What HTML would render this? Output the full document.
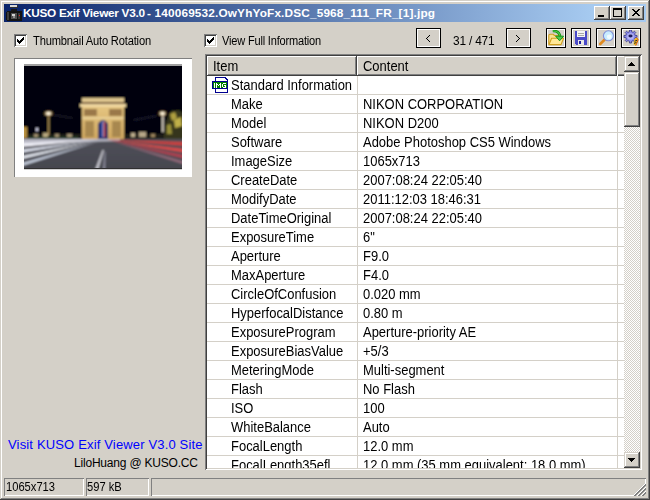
<!DOCTYPE html>
<html><head><meta charset="utf-8">
<style>
*{margin:0;padding:0;box-sizing:border-box}
html,body{width:650px;height:500px;overflow:hidden;background:#D4D0C8}
body{position:relative;font-family:"Liberation Sans",sans-serif;font-size:11px;color:#000}
.a{position:absolute}
.win{left:0;top:0;width:650px;height:500px;background:#D4D0C8;
 box-shadow:inset -1px -1px 0 #404040, inset 1px 1px 0 #D4D0C8, inset -2px -2px 0 #808080, inset 2px 2px 0 #FFFFFF}
.title{left:4px;top:4px;width:642px;height:18px;background:linear-gradient(to right,#0A246A 0,#A6CAF0 588px)}
.ttext{left:23px;top:4px;height:18px;line-height:18px;color:#fff;font-weight:bold;font-size:11.8px;letter-spacing:0;white-space:nowrap}
.cbtn{width:16px;height:14px;top:6px;background:#D4D0C8;
 box-shadow:inset -1px -1px 0 #404040, inset 1px 1px 0 #FFFFFF, inset -2px -2px 0 #808080}
.btn3{background:#D4D0C8;box-shadow:inset -1px -1px 0 #404040, inset 1px 1px 0 #D4D0C8, inset -2px -2px 0 #808080, inset 2px 2px 0 #FFFFFF}
.chk{width:13px;height:13px;background:#fff;box-shadow:inset 1px 1px 0 #808080, inset -1px -1px 0 #FFFFFF, inset 2px 2px 0 #404040, inset -2px -2px 0 #D4D0C8}
.u{font-size:12px;transform:scaleX(0.89);transform-origin:0 0;letter-spacing:0;white-space:nowrap}
.lbl{white-space:nowrap;line-height:13px;letter-spacing:-0.2px}
.fbtn{width:25px;height:20px;border:1px solid #000;box-shadow:inset 0 0 0 1px #fff;background:#D4D0C8}
.tbtn{width:20px;height:20px;border:1px solid #000;box-shadow:inset 0 0 0 1px #fff;background:#D4D0C8}
.tbtn svg{position:absolute;left:1px;top:1px}
.lv{left:205px;top:54px;width:437px;height:416px;background:#fff;
 box-shadow:inset 1px 1px 0 #808080, inset -1px -1px 0 #FFFFFF, inset 2px 2px 0 #404040, inset -2px -2px 0 #D4D0C8}
.hd{top:56px;height:20px;background:#D4D0C8;box-shadow:inset -1px -1px 0 #404040, inset 1px 1px 0 #FFFFFF, inset -2px -2px 0 #808080;
 font-size:13px;line-height:21px;padding-left:6px;white-space:nowrap}
.rows{left:207px;top:76px;width:417px;height:392px;overflow:hidden}
.row{position:relative;height:19px;border-bottom:1px solid #D4D0C8;font-size:13px;line-height:18px;white-space:nowrap}
.hs{position:absolute;left:6px;top:0;font-size:14px;transform:scaleX(0.926);transform-origin:0 0}
.row span{position:absolute;top:0;font-size:14px;transform:scaleX(0.926);transform-origin:0 0}
.c1{left:24px}
.c2{left:156px}
.vg{width:1px;background:#D4D0C8}
.sb{left:624px;top:56px;width:16px;height:412px;background-color:#D4D0C8;
 background-image:repeating-conic-gradient(#FFFFFF 0% 25%, #D4D0C8 0% 50%);background-size:2px 2px}
.sp{height:18px;box-shadow:inset 1px 1px 0 #808080, inset -1px -1px 0 #FFFFFF;padding-left:2px;line-height:18px;white-space:nowrap}
</style></head><body>
<div class="a win"></div>
<div class="a title"></div>
<!-- title icon -->
<svg class="a" style="left:5px;top:4px" width="17" height="17" viewBox="0 0 17 17" shape-rendering="crispEdges">
 <rect x="5" y="1" width="8" height="3" fill="#303030"/>
 <rect x="5" y="1" width="7" height="2" fill="#d8d8d8"/>
 <rect x="6" y="5" width="6" height="2" fill="#181818"/>
 <rect x="2" y="7" width="15" height="10" fill="#141414"/>
 <rect x="1" y="8" width="1" height="8" fill="#141414"/>
 <rect x="2" y="8" width="2" height="8" fill="#3c3c3c"/>
 <rect x="6" y="9" width="6" height="6" fill="#505050"/>
 <rect x="7" y="10" width="3" height="2" fill="#d0d0d0"/>
 <rect x="8" y="12" width="2" height="2" fill="#909090"/>
 <rect x="13" y="9" width="2" height="6" fill="#383838"/>
 <rect x="14" y="11" width="1" height="1" fill="#e02020"/>
</svg>
<div class="a ttext" style="letter-spacing:-0.28px">KUSO Exif Viewer V3.0</div><div class="a ttext" id="t2" style="left:147px;letter-spacing:0.16px">- 140069532.OwYhYoFx.DSC_5968_111_FR_[1].jpg</div>
<!-- caption buttons -->
<div class="a cbtn" style="left:594px"><div class="a" style="left:4px;top:9px;width:6px;height:2px;background:#000"></div></div>
<div class="a cbtn" style="left:610px"><div class="a" style="left:3px;top:2px;width:9px;height:9px;border:1px solid #000;border-top-width:2px"></div></div>
<div class="a cbtn" style="left:628px">
 <svg class="a" style="left:4px;top:3px" width="8" height="7" viewBox="0 0 8 7" shape-rendering="crispEdges" fill="#000">
  <rect x="0" y="0" width="2" height="1"/><rect x="6" y="0" width="2" height="1"/>
  <rect x="1" y="1" width="2" height="1"/><rect x="5" y="1" width="2" height="1"/>
  <rect x="2" y="2" width="4" height="1"/>
  <rect x="3" y="3" width="2" height="1"/>
  <rect x="2" y="4" width="4" height="1"/>
  <rect x="1" y="5" width="2" height="1"/><rect x="5" y="5" width="2" height="1"/>
  <rect x="0" y="6" width="2" height="1"/><rect x="6" y="6" width="2" height="1"/>
 </svg>
</div>

<!-- checkboxes -->
<div class="a chk" style="left:14px;top:34px">
 <svg class="a" style="left:3px;top:3px" width="7" height="7" viewBox="0 0 7 7" shape-rendering="crispEdges" fill="#000">
  <rect x="6" y="0" width="1" height="1"/><rect x="5" y="1" width="2" height="1"/><rect x="0" y="2" width="1" height="1"/><rect x="4" y="2" width="3" height="1"/>
  <rect x="0" y="3" width="2" height="1"/><rect x="3" y="3" width="3" height="1"/><rect x="0" y="4" width="5" height="1"/><rect x="1" y="5" width="3" height="1"/><rect x="2" y="6" width="1" height="1"/>
 </svg>
</div>
<div class="a lbl u" style="left:33px;top:35px;transform:scaleX(0.93)">Thumbnail Auto Rotation</div>
<div class="a chk" style="left:204px;top:34px">
 <svg class="a" style="left:3px;top:3px" width="7" height="7" viewBox="0 0 7 7" shape-rendering="crispEdges" fill="#000">
  <rect x="6" y="0" width="1" height="1"/><rect x="5" y="1" width="2" height="1"/><rect x="0" y="2" width="1" height="1"/><rect x="4" y="2" width="3" height="1"/>
  <rect x="0" y="3" width="2" height="1"/><rect x="3" y="3" width="3" height="1"/><rect x="0" y="4" width="5" height="1"/><rect x="1" y="5" width="3" height="1"/><rect x="2" y="6" width="1" height="1"/>
 </svg>
</div>
<div class="a lbl u" style="left:222px;top:35px;transform:scaleX(0.92)">View Full Information</div>

<!-- nav -->
<div class="a fbtn" style="left:416px;top:28px">
 <svg class="a" style="left:9px;top:6px" width="5" height="7" viewBox="0 0 5 7" shape-rendering="crispEdges" fill="#000">
  <rect x="3" y="0" width="1" height="1"/><rect x="2" y="1" width="1" height="1"/><rect x="1" y="2" width="1" height="1"/><rect x="0" y="3" width="1" height="1"/><rect x="1" y="4" width="1" height="1"/><rect x="2" y="5" width="1" height="1"/><rect x="3" y="6" width="1" height="1"/>
 </svg>
</div>
<div class="a lbl u" style="left:453px;top:35px;transform:scaleX(0.99)">31 / 471</div>
<div class="a fbtn" style="left:506px;top:28px">
 <svg class="a" style="left:9px;top:6px" width="5" height="7" viewBox="0 0 5 7" shape-rendering="crispEdges" fill="#000">
  <rect x="0" y="0" width="1" height="1"/><rect x="1" y="1" width="1" height="1"/><rect x="2" y="2" width="1" height="1"/><rect x="3" y="3" width="1" height="1"/><rect x="2" y="4" width="1" height="1"/><rect x="1" y="5" width="1" height="1"/><rect x="0" y="6" width="1" height="1"/>
 </svg>
</div>

<!-- toolbar buttons -->
<div class="a tbtn" style="left:546px;top:28px">
 <svg width="16" height="16" viewBox="0 0 16 16">
  <path d="M0.8 14.5 V5.6 Q0.8 4.3 2 4.3 H5.2 L6.4 5.5 H12 V8.5" fill="#F8E090" stroke="#D0A020" stroke-width="1.1"/>
  <path d="M1 14.6 L3.6 8.3 H15.6 L13 14.6 z" fill="#FFE898" stroke="#D0A020" stroke-width="1.1" stroke-linejoin="round"/>
  <path d="M4.8 1 C8.5 0.8 11.5 2 12.2 6.8" stroke="#109010" stroke-width="2.6" fill="none"/>
  <path d="M4.8 1 C8.5 0.8 11.5 2 12.2 6.8" stroke="#50C850" stroke-width="1.2" fill="none"/>
  <path d="M7.6 6.2 H15.6 L11.6 10.8 z" fill="#50C850" stroke="#109010" stroke-width="0.9" stroke-linejoin="round"/>
 </svg>
</div>
<div class="a tbtn" style="left:571px;top:28px">
 <svg width="16" height="16" viewBox="0 0 16 16" shape-rendering="crispEdges">
  <rect x="2" y="1" width="12" height="14" fill="#4A4AC8"/>
  <rect x="4" y="1" width="8" height="6" fill="#F4F4F4"/>
  <rect x="5" y="3" width="6" height="1" fill="#A8A8A8"/>
  <rect x="5" y="5" width="6" height="1" fill="#A8A8A8"/>
  <rect x="5" y="10" width="6" height="5" fill="#E8E8E8"/>
  <rect x="6" y="11" width="2" height="3" fill="#2020A0"/>
  <rect x="2" y="14" width="1" height="1" fill="#D4D0C8"/>
 </svg>
</div>
<div class="a tbtn" style="left:596px;top:28px">
 <svg width="16" height="16" viewBox="0 0 16 16">
  <line x1="2.2" y1="14" x2="6.5" y2="9.8" stroke="#E08A20" stroke-width="2.6" stroke-linecap="round"/>
  <circle cx="10.4" cy="5.8" r="5" fill="#C8ECFF" stroke="#8090D8" stroke-width="1.1"/>
  <circle cx="11.2" cy="6.8" r="2.4" fill="#F0FBFF"/>
 </svg>
</div>
<div class="a tbtn" style="left:621px;top:28px">
 <svg width="16" height="16" viewBox="0 0 16 16">
  <path d="M6.45 1.71 L6.47 -0.02 L8.53 -0.02 L8.55 1.71 L10.14 2.37 L11.38 1.16 L12.84 2.62 L11.63 3.86 L12.29 5.45 L14.02 5.47 L14.02 7.53 L12.29 7.55 L11.63 9.14 L12.84 10.38 L11.38 11.84 L10.14 10.63 L8.55 11.29 L8.53 13.02 L6.47 13.02 L6.45 11.29 L4.86 10.63 L3.62 11.84 L2.16 10.38 L3.37 9.14 L2.71 7.55 L0.98 7.53 L0.98 5.47 L2.71 5.45 L3.37 3.86 L2.16 2.62 L3.62 1.16 L4.86 2.37 z" fill="#8C8CE8" stroke="#282878" stroke-width="0.7" stroke-linejoin="round"/>
  <circle cx="7.5" cy="6.5" r="3.3" fill="#B4B4F6"/>
  <ellipse cx="7.5" cy="6" rx="2.1" ry="1.4" fill="#1c1c58"/>
  <path d="M11.2 9.2 L13.6 7.6 L15.2 9.8 L12.8 15.6 L10.6 14.6 z" fill="#F0B820"/>
  <path d="M11.6 11.2 L14.4 10.2 M11 13.4 L13.6 12.4" stroke="#202020" stroke-width="0.9"/>
  <path d="M13.6 7.6 L15.2 9.8 L12.8 15.6" stroke="#E06010" stroke-width="1" fill="none"/>
 </svg>
</div>

<!-- thumbnail -->
<div class="a" style="left:14px;top:58px;width:178px;height:119px;background:#fff;box-shadow:inset 1px 1px 0 #808080"></div>
<svg class="a" style="left:24px;top:64px" width="158" height="106" viewBox="0 0 158 106">
 <defs>
  <radialGradient id="lamp"><stop offset="0" stop-color="#ffffff"/><stop offset="0.35" stop-color="#fff0c8"/><stop offset="0.65" stop-color="#b08040" stop-opacity="0.45"/><stop offset="1" stop-color="#402010" stop-opacity="0"/></radialGradient>
  <linearGradient id="road" x1="0" y1="0" x2="0" y2="1"><stop offset="0" stop-color="#505058"/><stop offset="1" stop-color="#44464e"/></linearGradient>
  <linearGradient id="arcg" x1="0" y1="0" x2="0" y2="1"><stop offset="0" stop-color="#e4c480"/><stop offset="1" stop-color="#d0a860"/></linearGradient>
  <filter id="bl" x="-5%" y="-5%" width="110%" height="110%"><feGaussianBlur stdDeviation="0.8"/></filter>
  <clipPath id="pc"><rect x="0" y="2" width="158" height="102"/></clipPath>
 </defs>
 <rect x="0" y="0" width="158" height="2" fill="#a0a0a0"/>
 <g clip-path="url(#pc)"><g filter="url(#bl)">
 <rect x="-4" y="-2" width="166" height="80" fill="#04050b"/>
 <rect x="-4" y="56" width="166" height="18" fill="#05060f"/>
 <!-- horizon lights -->
 <rect x="-4" y="70" width="166" height="5" fill="#1e1c18"/>
 <rect x="-4" y="63" width="7" height="11" fill="#b89040"/>
 <rect x="10" y="70" width="4" height="3" fill="#a09070"/>
 <rect x="19" y="69" width="5" height="4" fill="#b8a880"/>
 <rect x="31" y="70" width="4" height="3" fill="#a09070"/>
 <rect x="43" y="70" width="5" height="3" fill="#a89878"/>
 <rect x="107" y="69" width="4" height="4" fill="#c0b090"/>
 <rect x="115" y="68" width="7" height="5" fill="#b8a888"/>
 <rect x="127" y="70" width="4" height="3" fill="#a08860"/>
 <rect x="4" y="73" width="50" height="1.5" fill="#2c4c30"/>
 <rect x="12" y="64" width="2" height="3" fill="#d8d8f0"/>
 <!-- tree -->
 <path d="M142 58 L147 47 L155 46 L162 52 L162 76 L140 76 L140 66 z" fill="#34341a"/>
 <path d="M146 50 L151 48 L153 54 L148 57 z" fill="#b0a040"/>
 <path d="M150 56 L157 53 L158 62 L151 64 z" fill="#c0b048"/>
 <path d="M143 61 L147 60 L148 70 L143 70 z" fill="#989038"/>
 <!-- lamps -->
 <rect x="24" y="50" width="1.3" height="21" fill="#b89858"/>
 <rect x="138" y="50" width="1.6" height="18" fill="#e8e0d0"/>
 <path d="M30 51 L48 54" stroke="#303040" stroke-width="0.8"/>
 <path d="M110 56 L132 52" stroke="#303048" stroke-width="0.8"/>
 <ellipse cx="24.5" cy="49.5" rx="6" ry="3.6" fill="url(#lamp)"/>
 <ellipse cx="138.5" cy="49.5" rx="5.5" ry="3.6" fill="url(#lamp)"/>
 <!-- arc -->
 <rect x="58" y="34" width="42" height="4" fill="#e0c890"/>
 <rect x="58" y="38" width="42" height="2" fill="#705030"/>
 <rect x="56" y="40" width="46" height="3" fill="#f0d8a0"/>
 <rect x="58" y="43" width="42" height="32" fill="url(#arcg)"/>
 <rect x="60" y="45" width="13" height="7" fill="#9a7848"/>
 <rect x="85" y="45" width="13" height="7" fill="#9a7848"/>
 <rect x="58" y="53" width="42" height="2" fill="#e8d098"/>
 <rect x="61" y="57" width="9" height="16" fill="#a88850"/>
 <rect x="88" y="57" width="9" height="16" fill="#a88850"/>
 <path d="M74 75 V60 Q79 52 84 60 V75 z" fill="#18286a"/>
 <rect x="78.5" y="57" width="1.2" height="16" fill="#c8c8e0"/>
 <rect x="79.7" y="58" width="1.5" height="15" fill="#c83828"/>
 <rect x="77" y="58" width="1.5" height="15" fill="#3050b0"/>
 <!-- road -->
 <path d="M-4 75 H162 V108 H-4 z" fill="url(#road)"/>
 <path d="M-4 75 L96 75 L96 77 L-4 79 z" fill="#b8b8c4"/>
 <!-- white streaks left -->
 <path d="M-4 79 L72 75.8 L-4 83 z" fill="#f0f0f8"/>
 <path d="M-4 86 L72 76.2 L-4 89 z" fill="#e0e4f0"/>
 <path d="M-4 92.5 L74 76.6 L-4 95.5 z" fill="#e8ecf4"/>
 <path d="M-4 99.5 L76 77 L-4 102.5 z" fill="#c8d0e0"/>
 <!-- red streaks right -->
 <path d="M162 78 L82 75.5 L162 82 z" fill="#c84040"/>
 <path d="M162 85 L84 76 L162 89 z" fill="#d84848"/>
 <path d="M162 91.5 L86 76.5 L162 95 z" fill="#b04050"/>
 <path d="M162 98 L88 77 L162 101 z" fill="#906878"/>
 <!-- lane lines -->
 <path d="M78.5 86 L80 86 L74 106 L71 106 z" fill="#c8c8d0"/>
 <path d="M80.5 88 L81.5 88 L81 106 L79 106 z" fill="#9090a0"/>
 </g></g>
 <rect x="0" y="104" width="158" height="1" fill="#303030"/>
 <rect x="0" y="105" width="158" height="1" fill="#d0d0d0"/>
</svg>

<!-- link texts -->
<div class="a" style="left:8px;top:437px;font-size:13px;line-height:15px;color:#0000FF;white-space:nowrap;letter-spacing:0.16px">Visit KUSO Exif Viewer V3.0 Site</div>
<div class="a" style="left:74px;top:456px;font-size:12px;line-height:15px;color:#000;white-space:nowrap;letter-spacing:-0.2px">LiloHuang @ KUSO.CC</div>

<!-- list view -->
<div class="a lv"></div>
<div class="a hd" style="left:207px;width:150px"><span class="hs">Item</span></div>
<div class="a hd" style="left:357px;width:260px"><span class="hs">Content</span></div>
<div class="a hd" style="left:617px;width:7px;padding:0;box-shadow:inset 1px 1px 0 #FFFFFF, inset 0 -1px 0 #404040, inset 0 -2px 0 #808080"></div>
<div class="a rows">
 <div class="a vg" style="left:150px;top:0;height:392px"></div>
 <div class="a vg" style="left:410px;top:0;height:392px"></div>
 <div class="row"><svg style="position:absolute;left:5px;top:1px" width="17" height="17" viewBox="0 0 17 17" shape-rendering="crispEdges">
   <path d="M3 0 H14 V1 H15 V2 H16 V16 H3 z" fill="#000090"/><path d="M4 1 H13 V2 H14 V3 H15 V15 H4 z" fill="#fff"/>
   <rect x="0" y="4" width="16" height="8" fill="#000090"/><rect x="1" y="5" width="14" height="6" fill="#008000"/>
   <g fill="#fff"><rect x="2" y="6" width="1" height="5"/><rect x="4" y="6" width="1" height="5"/><rect x="5" y="7" width="1" height="1"/><rect x="6" y="8" width="1" height="1"/><rect x="7" y="7" width="1" height="1"/><rect x="8" y="6" width="1" height="5"/><rect x="11" y="6" width="3" height="1"/><rect x="10" y="7" width="1" height="3"/><rect x="11" y="10" width="3" height="1"/><rect x="12" y="8" width="2" height="1"/><rect x="13" y="9" width="1" height="1"/></g>
  </svg><span class="c1">Standard Information</span></div>
 <div class="row"><span class="c1">Make</span><span class="c2">NIKON CORPORATION</span></div>
 <div class="row"><span class="c1">Model</span><span class="c2">NIKON D200</span></div>
 <div class="row"><span class="c1">Software</span><span class="c2">Adobe Photoshop CS5 Windows</span></div>
 <div class="row"><span class="c1">ImageSize</span><span class="c2">1065x713</span></div>
 <div class="row"><span class="c1">CreateDate</span><span class="c2">2007:08:24 22:05:40</span></div>
 <div class="row"><span class="c1">ModifyDate</span><span class="c2">2011:12:03 18:46:31</span></div>
 <div class="row"><span class="c1">DateTimeOriginal</span><span class="c2">2007:08:24 22:05:40</span></div>
 <div class="row"><span class="c1">ExposureTime</span><span class="c2">6"</span></div>
 <div class="row"><span class="c1">Aperture</span><span class="c2">F9.0</span></div>
 <div class="row"><span class="c1">MaxAperture</span><span class="c2">F4.0</span></div>
 <div class="row"><span class="c1">CircleOfConfusion</span><span class="c2">0.020 mm</span></div>
 <div class="row"><span class="c1">HyperfocalDistance</span><span class="c2">0.80 m</span></div>
 <div class="row"><span class="c1">ExposureProgram</span><span class="c2">Aperture-priority AE</span></div>
 <div class="row"><span class="c1">ExposureBiasValue</span><span class="c2">+5/3</span></div>
 <div class="row"><span class="c1">MeteringMode</span><span class="c2">Multi-segment</span></div>
 <div class="row"><span class="c1">Flash</span><span class="c2">No Flash</span></div>
 <div class="row"><span class="c1">ISO</span><span class="c2">100</span></div>
 <div class="row"><span class="c1">WhiteBalance</span><span class="c2">Auto</span></div>
 <div class="row"><span class="c1">FocalLength</span><span class="c2">12.0 mm</span></div>
 <div class="row"><span class="c1">FocalLength35efl</span><span class="c2">12.0 mm (35 mm equivalent: 18.0 mm)</span></div>
</div>
<!-- scrollbar -->
<div class="a sb"></div>
<div class="a cbtn" style="left:624px;top:56px;height:16px;box-shadow:inset -1px -1px 0 #404040, inset 1px 1px 0 #D4D0C8, inset -2px -2px 0 #808080, inset 2px 2px 0 #FFFFFF">
 <svg class="a" style="left:4px;top:6px" width="7" height="4" viewBox="0 0 7 4" shape-rendering="crispEdges" fill="#000"><rect x="3" y="0" width="1" height="1"/><rect x="2" y="1" width="3" height="1"/><rect x="1" y="2" width="5" height="1"/><rect x="0" y="3" width="7" height="1"/></svg>
</div>
<div class="a btn3" style="left:624px;top:72px;width:16px;height:55px"></div>
<div class="a cbtn" style="left:624px;top:452px;height:16px;box-shadow:inset -1px -1px 0 #404040, inset 1px 1px 0 #D4D0C8, inset -2px -2px 0 #808080, inset 2px 2px 0 #FFFFFF">
 <svg class="a" style="left:4px;top:6px" width="7" height="4" viewBox="0 0 7 4" shape-rendering="crispEdges" fill="#000"><rect x="0" y="0" width="7" height="1"/><rect x="1" y="1" width="5" height="1"/><rect x="2" y="2" width="3" height="1"/><rect x="3" y="3" width="1" height="1"/></svg>
</div>

<!-- status bar -->
<div class="a sp" style="left:4px;top:478px;width:80px"><span class="a u" style="left:2px;top:2px;line-height:15px;transform:scaleX(0.93)">1065x713</span></div>
<div class="a sp" style="left:86px;top:478px;width:63px"><span class="a u" style="left:1px;top:2px;line-height:15px;transform:scaleX(0.93)">597 kB</span></div>
<div class="a sp" style="left:151px;top:478px;width:495px"></div>
<svg class="a" style="left:633px;top:483px" width="13" height="13" viewBox="0 0 13 13" shape-rendering="crispEdges"><rect x="12" y="0" width="1" height="1" fill="#FFFFFF"/><rect x="11" y="1" width="1" height="1" fill="#FFFFFF"/><rect x="12" y="1" width="1" height="1" fill="#808080"/><rect x="10" y="2" width="1" height="1" fill="#FFFFFF"/><rect x="11" y="2" width="1" height="1" fill="#808080"/><rect x="12" y="2" width="1" height="1" fill="#808080"/><rect x="9" y="3" width="1" height="1" fill="#FFFFFF"/><rect x="10" y="3" width="1" height="1" fill="#808080"/><rect x="11" y="3" width="1" height="1" fill="#808080"/><rect x="12" y="3" width="1" height="1" fill="#D4D0C8"/><rect x="8" y="4" width="1" height="1" fill="#FFFFFF"/><rect x="9" y="4" width="1" height="1" fill="#808080"/><rect x="10" y="4" width="1" height="1" fill="#808080"/><rect x="11" y="4" width="1" height="1" fill="#D4D0C8"/><rect x="12" y="4" width="1" height="1" fill="#FFFFFF"/><rect x="7" y="5" width="1" height="1" fill="#FFFFFF"/><rect x="8" y="5" width="1" height="1" fill="#808080"/><rect x="9" y="5" width="1" height="1" fill="#808080"/><rect x="10" y="5" width="1" height="1" fill="#D4D0C8"/><rect x="11" y="5" width="1" height="1" fill="#FFFFFF"/><rect x="12" y="5" width="1" height="1" fill="#808080"/><rect x="6" y="6" width="1" height="1" fill="#FFFFFF"/><rect x="7" y="6" width="1" height="1" fill="#808080"/><rect x="8" y="6" width="1" height="1" fill="#808080"/><rect x="9" y="6" width="1" height="1" fill="#D4D0C8"/><rect x="10" y="6" width="1" height="1" fill="#FFFFFF"/><rect x="11" y="6" width="1" height="1" fill="#808080"/><rect x="12" y="6" width="1" height="1" fill="#808080"/><rect x="5" y="7" width="1" height="1" fill="#FFFFFF"/><rect x="6" y="7" width="1" height="1" fill="#808080"/><rect x="7" y="7" width="1" height="1" fill="#808080"/><rect x="8" y="7" width="1" height="1" fill="#D4D0C8"/><rect x="9" y="7" width="1" height="1" fill="#FFFFFF"/><rect x="10" y="7" width="1" height="1" fill="#808080"/><rect x="11" y="7" width="1" height="1" fill="#808080"/><rect x="12" y="7" width="1" height="1" fill="#D4D0C8"/><rect x="4" y="8" width="1" height="1" fill="#FFFFFF"/><rect x="5" y="8" width="1" height="1" fill="#808080"/><rect x="6" y="8" width="1" height="1" fill="#808080"/><rect x="7" y="8" width="1" height="1" fill="#D4D0C8"/><rect x="8" y="8" width="1" height="1" fill="#FFFFFF"/><rect x="9" y="8" width="1" height="1" fill="#808080"/><rect x="10" y="8" width="1" height="1" fill="#808080"/><rect x="11" y="8" width="1" height="1" fill="#D4D0C8"/><rect x="12" y="8" width="1" height="1" fill="#FFFFFF"/><rect x="3" y="9" width="1" height="1" fill="#FFFFFF"/><rect x="4" y="9" width="1" height="1" fill="#808080"/><rect x="5" y="9" width="1" height="1" fill="#808080"/><rect x="6" y="9" width="1" height="1" fill="#D4D0C8"/><rect x="7" y="9" width="1" height="1" fill="#FFFFFF"/><rect x="8" y="9" width="1" height="1" fill="#808080"/><rect x="9" y="9" width="1" height="1" fill="#808080"/><rect x="10" y="9" width="1" height="1" fill="#D4D0C8"/><rect x="11" y="9" width="1" height="1" fill="#FFFFFF"/><rect x="12" y="9" width="1" height="1" fill="#808080"/><rect x="2" y="10" width="1" height="1" fill="#FFFFFF"/><rect x="3" y="10" width="1" height="1" fill="#808080"/><rect x="4" y="10" width="1" height="1" fill="#808080"/><rect x="5" y="10" width="1" height="1" fill="#D4D0C8"/><rect x="6" y="10" width="1" height="1" fill="#FFFFFF"/><rect x="7" y="10" width="1" height="1" fill="#808080"/><rect x="8" y="10" width="1" height="1" fill="#808080"/><rect x="9" y="10" width="1" height="1" fill="#D4D0C8"/><rect x="10" y="10" width="1" height="1" fill="#FFFFFF"/><rect x="11" y="10" width="1" height="1" fill="#808080"/><rect x="12" y="10" width="1" height="1" fill="#808080"/><rect x="1" y="11" width="1" height="1" fill="#FFFFFF"/><rect x="2" y="11" width="1" height="1" fill="#808080"/><rect x="3" y="11" width="1" height="1" fill="#808080"/><rect x="4" y="11" width="1" height="1" fill="#D4D0C8"/><rect x="5" y="11" width="1" height="1" fill="#FFFFFF"/><rect x="6" y="11" width="1" height="1" fill="#808080"/><rect x="7" y="11" width="1" height="1" fill="#808080"/><rect x="8" y="11" width="1" height="1" fill="#D4D0C8"/><rect x="9" y="11" width="1" height="1" fill="#FFFFFF"/><rect x="10" y="11" width="1" height="1" fill="#808080"/><rect x="11" y="11" width="1" height="1" fill="#808080"/><rect x="12" y="11" width="1" height="1" fill="#D4D0C8"/><rect x="0" y="12" width="1" height="1" fill="#FFFFFF"/><rect x="1" y="12" width="1" height="1" fill="#808080"/><rect x="2" y="12" width="1" height="1" fill="#808080"/><rect x="3" y="12" width="1" height="1" fill="#D4D0C8"/><rect x="4" y="12" width="1" height="1" fill="#FFFFFF"/><rect x="5" y="12" width="1" height="1" fill="#808080"/><rect x="6" y="12" width="1" height="1" fill="#808080"/><rect x="7" y="12" width="1" height="1" fill="#D4D0C8"/><rect x="8" y="12" width="1" height="1" fill="#FFFFFF"/><rect x="9" y="12" width="1" height="1" fill="#808080"/><rect x="10" y="12" width="1" height="1" fill="#808080"/><rect x="11" y="12" width="1" height="1" fill="#D4D0C8"/><rect x="12" y="12" width="1" height="1" fill="#D4D0C8"/></svg>
</body></html>
